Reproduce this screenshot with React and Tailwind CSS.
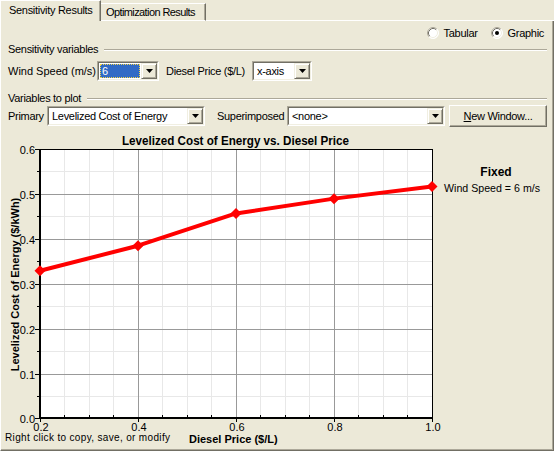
import React from "react";

const FONT = "'Liberation Sans', Arial, sans-serif";

function Arrow() {
  return (
    <svg width="7" height="4" viewBox="0 0 7 4" className="block">
      <polygon points="0,0 7,0 3.5,4" fill="black" />
    </svg>
  );
}

function DropBtn() {
  return (
    <div className="w-[16px] h-full shrink-0 bg-[#ECE9D8] border border-t-[#F1EFE2] border-l-[#F1EFE2] border-b-[#716F64] border-r-[#716F64] shadow-[inset_1px_1px_white,inset_-1px_-1px_#ACA899] flex items-center justify-center">
      <Arrow />
    </div>
  );
}

function Combo({ w, children, selected }) {
  return (
    <div className={`h-[20px] shrink-0 ${w} border border-t-[#ACA899] border-l-[#ACA899] border-b-white border-r-white`}>
      <div className="h-full flex border border-t-[#716F64] border-l-[#716F64] border-b-[#F1EFE2] border-r-[#F1EFE2] bg-white">
        {selected ? (
          <div className="flex-1 p-[1px]">
            <div className="h-full bg-[#316AC5] border border-dotted border-[#f4d54a] text-white pl-[1px] leading-[12px] text-[11px]">
              {children}
            </div>
          </div>
        ) : (
          <div className="flex-1 pl-[3px] text-[11px] leading-[16px] whitespace-nowrap overflow-hidden">
            {children}
          </div>
        )}
        <DropBtn />
      </div>
    </div>
  );
}

function Radio({ checked }) {
  return (
    <svg width="12" height="12" viewBox="0 0 12 12" className="block shrink-0">
      <circle cx="6" cy="6" r="5.5" fill="white" />
      <path d="M 2.11 9.89 A 5.5 5.5 0 0 1 9.89 2.11" stroke="#ACA899" fill="none" />
      <path d="M 9.89 2.11 A 5.5 5.5 0 0 1 2.11 9.89" stroke="#ffffff" fill="none" />
      <path d="M 2.82 9.18 A 4.5 4.5 0 0 1 9.18 2.82" stroke="#716F64" fill="none" />
      <path d="M 9.18 2.82 A 4.5 4.5 0 0 1 2.82 9.18" stroke="#F1EFE2" fill="none" />
      {checked && <circle cx="6" cy="6" r="2" fill="black" />}
    </svg>
  );
}

function Section({ label }) {
  return (
    <div className="h-[14px] flex items-center pl-[7px] pr-[5px]">
      <span className="text-[11px] leading-[14px] whitespace-nowrap">{label}</span>
      <div className="flex-1 ml-[6px] mt-[2px] h-[2px] border-t border-t-[#ACA899] border-b border-b-white" />
    </div>
  );
}

function Chart() {
  const yPix = [418, 374, 329, 284, 239, 194, 149];
  const yMinor = [396, 351, 306, 261, 216, 171];
  const xPix = [40, 138, 236, 334, 432];
  const xMinor = [64, 89, 113, 162, 187, 211, 260, 285, 309, 358, 383, 407];
  const data = [0.329, 0.385, 0.457, 0.49, 0.517];
  const py = (v) => 418.3 - v * 448.3;
  const pts = data.map((v, i) => [40 + i * 98, py(v)]);
  return (
    <svg width="551" height="322" viewBox="1 127 551 322" className="block tracking-normal">
      <rect x="40" y="149" width="392" height="269" fill="white" />
      {xMinor.map((x) => (
        <line key={"xm" + x} x1={x + 0.5} x2={x + 0.5} y1="149" y2="418" stroke="#E8E8E8" />
      ))}
      {yMinor.map((y) => (
        <line key={"ym" + y} x1="40" x2="432" y1={y + 0.5} y2={y + 0.5} stroke="#E8E8E8" />
      ))}
      {xPix.slice(1, 4).map((x) => (
        <line key={"xM" + x} x1={x + 0.5} x2={x + 0.5} y1="149" y2="418" stroke="#999999" />
      ))}
      {yPix.slice(1, 6).map((y) => (
        <line key={"yM" + y} x1="40" x2="432" y1={y + 0.5} y2={y + 0.5} stroke="#999999" />
      ))}
      {/* frame */}
      <line x1="40" x2="433" y1="149.5" y2="149.5" stroke="black" />
      <line x1="432.5" x2="432.5" y1="149" y2="419" stroke="black" />
      <line x1="40" x2="40" y1="149" y2="419" stroke="black" strokeWidth="2" />
      <line x1="39" x2="433" y1="418" y2="418" stroke="black" strokeWidth="2" />
      {/* ticks */}
      {yPix.map((y) => (
        <line key={"yt" + y} x1="35" x2="40" y1={y + 0.5} y2={y + 0.5} stroke="black" />
      ))}
      {yMinor.map((y) => (
        <line key={"ytm" + y} x1="37" x2="40" y1={y + 0.5} y2={y + 0.5} stroke="black" />
      ))}
      {xPix.map((x) => (
        <line key={"xt" + x} x1={x + 0.5} x2={x + 0.5} y1="418" y2="422" stroke="black" />
      ))}
      {xMinor.map((x) => (
        <line key={"xtm" + x} x1={x + 0.5} x2={x + 0.5} y1="415" y2="418" stroke="black" />
      ))}
      {/* data */}
      <polyline
        points={pts.map((p) => p.join(",")).join(" ")}
        fill="none"
        stroke="#FF0000"
        strokeWidth="4"
        strokeLinejoin="round"
      />
      {pts.map(([x, y], i) => (
        <polygon
          key={"d" + i}
          points={`${x - 5.5},${y} ${x},${y - 5.5} ${x + 5.5},${y} ${x},${y + 5.5}`}
          fill="#FF0000"
        />
      ))}
      {/* labels */}
      <g fontFamily={FONT} fontSize="11" fill="black">
        {["0.0", "0.1", "0.2", "0.3", "0.4", "0.5", "0.6"].map((t, i) => (
          <text key={t} x="35" y={yPix[i] + 4.5} textAnchor="end">
            {t}
          </text>
        ))}
        {["0.2", "0.4", "0.6", "0.8", "1.0"].map((t, i) => (
          <text key={"x" + t} x={xPix[i] + 1} y="431" textAnchor="middle">
            {t}
          </text>
        ))}
        <text x="444" y="191.5" textLength="96" lengthAdjust="spacingAndGlyphs">
          Wind Speed = 6 m/s
        </text>
        <text x="5" y="441" fontSize="10" textLength="165" lengthAdjust="spacing">
          Right click to copy, save, or modify
        </text>
      </g>
      <g fontFamily={FONT} fontWeight="bold" fill="black">
        <text x="235.5" y="145" fontSize="12" textAnchor="middle" textLength="227" lengthAdjust="spacingAndGlyphs">
          Levelized Cost of Energy vs. Diesel Price
        </text>
        <text x="189" y="443" fontSize="11">
          Diesel Price ($/L)
        </text>
        <text x="496" y="175.5" fontSize="12" textAnchor="middle">
          Fixed
        </text>
        <text
          x="0"
          y="0"
          fontSize="11"
          textAnchor="middle"
          transform="translate(19 284.5) rotate(-90)"
        >
          Levelized Cost of Energy ($/kWh)
        </text>
      </g>
    </svg>
  );
}

export default function App() {
  return (
    <div className="w-[554px] h-[451px] bg-[#ECE9D8] text-black font-['Liberation_Sans',Arial,sans-serif] tracking-[-0.3px] flex flex-col overflow-hidden">
      {/* tabs */}
      <div className="h-[21px] flex items-end shrink-0">
        <div className="w-[101px] h-[21px] border-l border-l-white border-t border-t-white border-r border-r-[#716F64] shadow-[inset_-1px_0_#ACA899] pl-[8px] text-[11px] leading-[18px] whitespace-nowrap">
          Sensitivity Results
        </div>
        <div className="w-[105px] h-[18px] border-t border-t-white border-r border-r-[#716F64] border-b border-b-white shadow-[inset_-1px_0_#ACA899] pl-[5px] text-[11px] leading-[16px] tracking-[-0.6px] whitespace-nowrap overflow-hidden">
          Optimization Results
        </div>
        <div className="flex-1 h-[1px] bg-white" />
      </div>
      {/* panel */}
      <div className="flex-1 flex flex-col border-l border-l-white border-r border-r-[#716F64] border-b border-b-[#716F64] shadow-[inset_-1px_-1px_#ACA899] pr-[1px]">
        <div className="mt-[5px] h-[14px] flex items-center justify-end pr-[8px] text-[11px] leading-[14px]">
          <Radio />
          <span className="ml-[5px]">Tabular</span>
          <div className="ml-[13px]">
            <Radio checked />
          </div>
          <span className="ml-[5px]">Graphic</span>
        </div>
        <div className="mt-[2px]">
          <Section label="Sensitivity variables" />
        </div>
        <div className="mt-[5px] h-[20px] flex items-center pl-[7px] text-[11px] leading-[14px]">
          <span className="w-[89px] whitespace-nowrap tracking-normal">Wind Speed (m/s)</span>
          <Combo w="w-[62px]" selected>
            6
          </Combo>
          <span className="ml-[7px] w-[86px] whitespace-nowrap">Diesel Price ($/L)</span>
          <Combo w="w-[60px]">x-axis</Combo>
        </div>
        <div className="mt-[10px]">
          <Section label="Variables to plot" />
        </div>
        <div className="h-[22px] flex items-center pl-[7px] text-[11px] leading-[14px]">
          <span className="w-[39px] whitespace-nowrap">Primary</span>
          <Combo w="w-[158px]">Levelized Cost of Energy</Combo>
          <span className="ml-[12px] w-[70px] whitespace-nowrap">Superimposed</span>
          <Combo w="w-[158px]">&lt;none&gt;</Combo>
          <div className="ml-[4px] w-[98px] h-[22px] shrink-0 bg-[#ECE9D8] border border-t-white border-l-white border-b-[#716F64] border-r-[#716F64] shadow-[inset_-1px_-1px_#ACA899] flex items-center justify-center text-[11px]">
            <span>
              <span className="underline">N</span>ew Window...
            </span>
          </div>
        </div>
        <Chart />
      </div>
    </div>
  );
}
